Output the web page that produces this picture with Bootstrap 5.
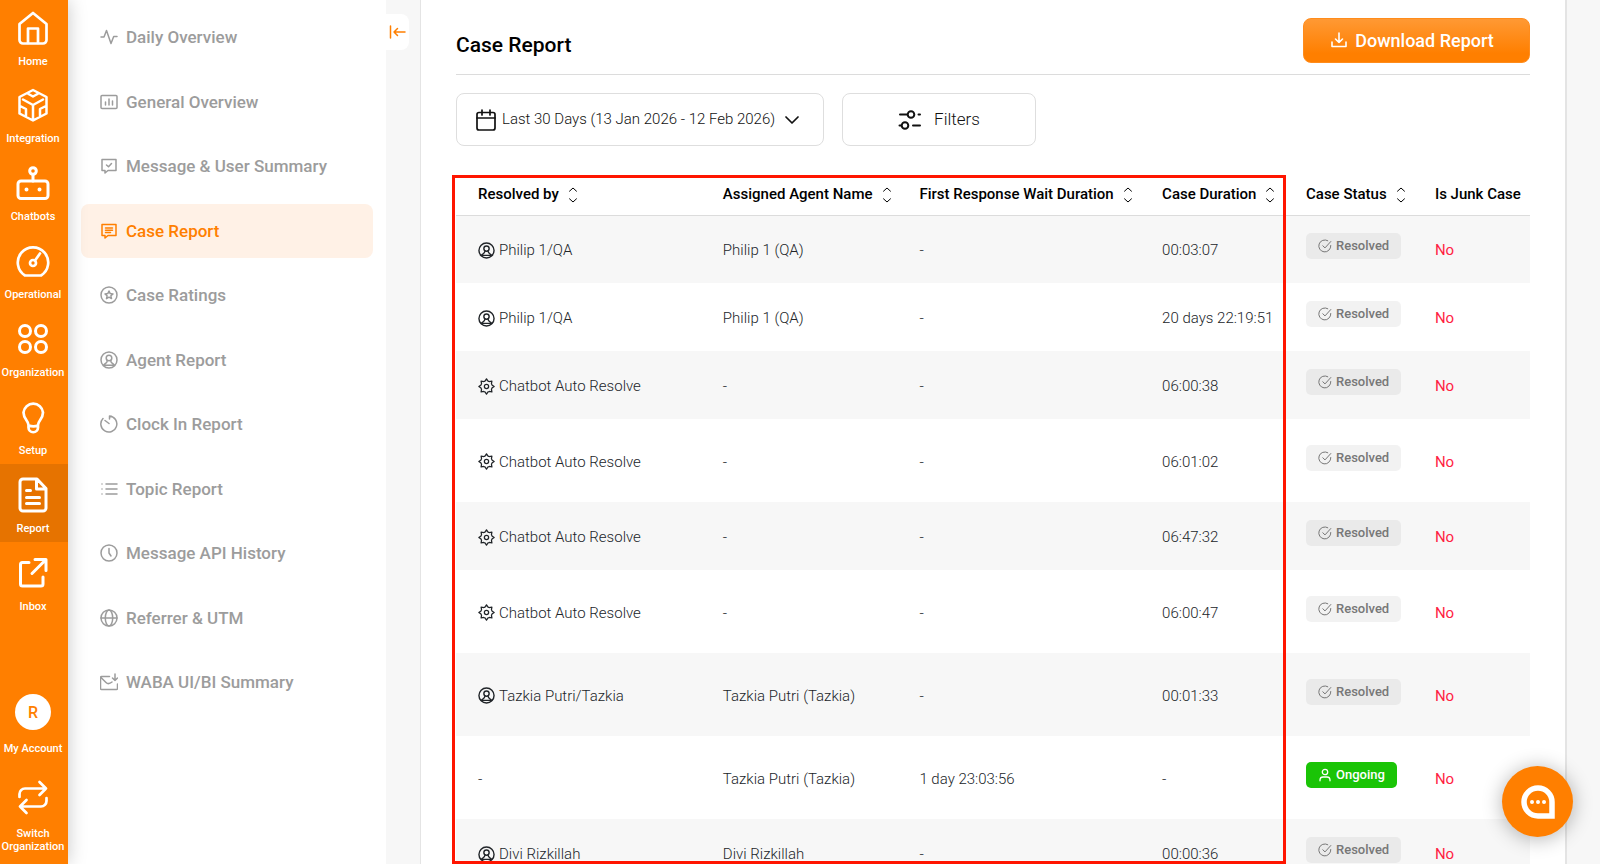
<!DOCTYPE html>
<html lang="en">
<head>
<meta charset="utf-8">
<meta name="viewport" content="width=device-width, initial-scale=1">
<title>Case Report</title>
<link href="https://cdn.jsdelivr.net/npm/bootstrap@5.3.0/dist/css/bootstrap.min.css" rel="stylesheet">
<style>
:root{--brand:#ff7f00;--brand-dark:#e67300;--soft:#f7f7f7;--line:#dcdcdc;--muted:#9c9c9c}
body{font-family:Roboto,"Liberation Sans",sans-serif;font-size:16px;color:#111;background:var(--soft);overflow:hidden}
svg{fill:none;stroke:currentColor;stroke-linecap:round;stroke-linejoin:round;flex:none}
.rail{width:68px;background:var(--brand);box-shadow:0 0 18px rgba(0,0,0,.22);z-index:3}
.rail a{color:#fff;font-size:11px;line-height:13px;font-weight:500;height:78px;padding:13px 0 0 0;margin-right:2px}
.rail a:first-child{height:74px;padding-top:10px}
.rail a.active{background:var(--brand-dark);margin-right:0;padding-right:2px}
.rail svg{width:36px;height:36px;stroke-width:2;margin-bottom:9px}
.rail .account:first-child{height:84px;padding-top:0}
.avatar{width:36px;height:36px;background:#fff;color:var(--brand);font-size:16px;margin-bottom:12px}
.rail .switch{height:86px;padding-top:2px}
.rail .switch svg{margin-bottom:11px}
.side{width:318px;background:#fff;padding:10px 13px 155px 13px;z-index:2}
.side a{color:var(--muted);font-size:17px;line-height:24px;font-weight:500;padding:15px 19px;border-radius:8px}
.side a.active{background:#fff1e6;color:var(--brand)}
.side svg{width:18px;height:18px;stroke-width:1.5}
.collapser{left:100%;top:14px;width:23px;height:36px;background:#fff;border-radius:0 8px 8px 0;color:var(--brand)}
.panel{margin:0 33px 0 34px;border:1px solid #e4e4e4;border-width:0 2px 0 1px;background:#fff;padding:0 35px}
.head{height:75px;border-bottom:1px solid var(--line)}
.head h1{font-size:21px;line-height:26px;font-weight:500;color:#000}
.btn-download{width:227px;height:45px;margin-top:6px;padding:0 20px 0 12px;border-radius:8px;color:#fff;font-size:18px;font-weight:500;border:1px solid #ff8c1c;background:linear-gradient(#ff9934,#ff7f00 80%)}
.btn-download:hover{color:#fff;background:var(--brand)}
.tools{gap:18px;padding:18px 0 29px}
.btn-tool{height:53px;border:1px solid #dedede;border-radius:8px;background:#fff;font-weight:300;color:#111}
.btn-date{width:368px;padding:0 19px;font-size:15px;gap:6px}
.btn-filter{width:194px;font-size:17px}
.report-area{min-height:0}
.report{table-layout:fixed;--bs-table-bg:transparent}
.report th,.report td{border:0;padding:0 0 0 22px;white-space:nowrap;vertical-align:middle}
.report thead th{height:40px;padding-bottom:1px;border-bottom:1px solid var(--line);font-size:15px;line-height:20px;font-weight:500;color:#000}
.report thead svg{width:12px;height:16px;stroke-width:1;margin-left:8px}
.report td{height:68px;padding-top:2px;font-weight:300;font-size:15px;line-height:20px}
.report tr.tall td{height:83px}
.report tbody tr:nth-child(odd){background:var(--soft)}
.report .junk{color:#ff1f44;font-weight:400}
.c-by{width:22.8%}.c-agent{width:18.3%}.c-wait{width:22.6%}.c-dur{width:13.4%}.c-status{width:12%}
.status{height:26px;padding:0 12px;margin-bottom:8px;border-radius:5px;font-size:13px;line-height:26px;font-weight:500;color:#777;background:rgba(0,0,0,.05)}
.status.live{background:#1ac406;color:#fff}
.focus-frame{top:0;left:-4px;width:77.7%;bottom:0;border:3px solid #ff1500;pointer-events:none}
.chat{right:27px;bottom:27px;width:71px;height:71px;background:var(--brand);color:#fff;box-shadow:0 2px 20px rgba(0,0,0,.3);z-index:5}
</style>
</head>
<body>
<svg width="0" height="0" class="position-absolute" aria-hidden="true">
<symbol id="i-user" viewBox="0 0 18 18"><circle cx="9" cy="9" r="8"/><circle cx="9" cy="7" r="2.800"/><path d="M3.500 14.200c1.200-1.800 3.600-1.800 3.900-4.700M14.500 14.200c-1.200-1.800-3.600-1.800-3.900-4.700M3.500 14.200h11"/></symbol>
<symbol id="i-gear" viewBox="0 0 24 24"><circle cx="12" cy="12" r="3"/><path d="M12 1.200 14.200 4.300a8 8 0 0 1 1.700.7L19.600 4.400 19 8.100a8 8 0 0 1 .7 1.700L22.800 12 19.700 14.200a8 8 0 0 1-.7 1.700L19.600 19.600 15.900 19a8 8 0 0 1-1.700.7L12 22.800 9.800 19.700A8 8 0 0 1 8.100 19L4.400 19.600 5 15.900a8 8 0 0 1-.7-1.700L1.200 12 4.300 9.800A8 8 0 0 1 5 8.100L4.400 4.400 8.100 5a8 8 0 0 1 1.700-.7z"/></symbol>
<symbol id="i-sort" viewBox="0 0 10 16"><path d="M1.500 4.200 5 1l3.500 3.200M1.500 11.800 5 15l3.500-3.200"/></symbol>
<symbol id="i-check" viewBox="0 0 14 14"><path d="M12.800 6.500A6 6 0 1 1 9.800 1.700M4.800 6.800 7 8.900l5.800-6.400"/></symbol>
</svg>

<div class="d-flex vh-100">
<nav class="rail d-flex flex-column justify-content-between flex-shrink-0 text-center" aria-label="Main">
<div>
<a href="#" class="d-flex flex-column align-items-center text-decoration-none"><svg viewBox="0 0 36 36" style="stroke-width:2.7"><path d="M4.500 14 18 3l13.500 11v16a3.500 3.500 0 0 1-3.500 3.500H8A3.500 3.500 0 0 1 4.500 30z"/><path d="M13 33V18.500h10V33"/></svg>Home</a>
<a href="#" class="d-flex flex-column align-items-center text-decoration-none"><svg viewBox="0 0 36 36" style="stroke-width:2.5"><path d="M18 3 31.500 10v16.500L18 33.500 4.500 26.500V10zM18 20v13M8 12.500l10 5.500 10-5.500M18 18v3M13.500 7 18 9.500 22.500 7M5 19l6 3v6.500M31 19l-6 3v6.500"/></svg>Integration</a>
<a href="#" class="d-flex flex-column align-items-center text-decoration-none"><svg viewBox="0 0 36 36" style="stroke-width:3"><rect x="3" y="16" width="30" height="17.500" rx="3"/><circle cx="18" cy="6" r="3.300"/><path d="M18 9.500V16"/><path d="M11.500 24.500h.01M24.500 24.500h.01" stroke-width="4"/></svg>Chatbots</a>
<a href="#" class="d-flex flex-column align-items-center text-decoration-none"><svg viewBox="0 0 36 36" style="stroke-width:2.7"><path d="M10 32.500a15.200 15.200 0 1 1 16 0z"/><circle cx="18" cy="20" r="3"/><path d="M20 17.500l5-7"/></svg>Operational</a>
<a href="#" class="d-flex flex-column align-items-center text-decoration-none"><svg viewBox="0 0 36 36" style="stroke-width:3"><circle cx="10" cy="10" r="5.500"/><circle cx="26" cy="10" r="5.500"/><circle cx="10" cy="26" r="5.500"/><circle cx="26" cy="26" r="5.500"/></svg>Organization</a>
<a href="#" class="d-flex flex-column align-items-center text-decoration-none"><svg viewBox="0 0 36 36" style="stroke-width:2.7"><path d="M13.500 26c0-4-5-6-5-12.500a9.800 9.800 0 0 1 19.500 0C28 20 23 22 23 26v2.500a4.700 4.700 0 0 1-9.500 0zM14 26.500c2.800 1 6 1 9 0"/></svg>Setup</a>
<a href="#" class="active d-flex flex-column align-items-center text-decoration-none" aria-current="page"><svg viewBox="0 0 36 36" style="stroke-width:3"><path d="M8 2h14l9 9.500V31a3 3 0 0 1-3 3H8a3 3 0 0 1-3-3V5a3 3 0 0 1 3-3zM21.500 3v9H31M11.500 13.500h4M11.500 20.500h13M11.500 26.500h13"/></svg>Report</a>
<a href="#" class="d-flex flex-column align-items-center text-decoration-none"><svg viewBox="0 0 36 36" style="stroke-width:3"><path d="M14 7.500H7.500a2 2 0 0 0-2 2V29a2 2 0 0 0 2 2H26a2 2 0 0 0 2-2v-7M20 4.500h11v11M30.500 5 17 18.500"/></svg>Inbox</a>
</div>
<div>
<a href="#" class="account d-flex flex-column align-items-center text-decoration-none"><span class="avatar rounded-circle d-flex align-items-center justify-content-center">R</span>My Account</a>
<a href="#" class="switch d-flex flex-column align-items-center text-decoration-none"><svg viewBox="0 0 36 36" style="stroke-width:2.7"><path d="M4.500 17v-3A5.500 5.500 0 0 1 10 8.500h21M24.500 2 31 8.500 24.500 15M31.500 18v3a5.500 5.500 0 0 1-5.500 5.500H5M11.500 20 5 26.500l6.500 6.500"/></svg>Switch<br>Organization</a>
</div>
</nav>

<nav class="side position-relative d-flex flex-column justify-content-between flex-shrink-0" aria-label="Reports">
<a href="#" class="d-flex align-items-center gap-2 text-decoration-none"><svg viewBox="0 0 18 18"><path d="M1 9h3l2.500-6.500 4.500 13L13.700 8.500H17"/></svg>Daily Overview</a>
<a href="#" class="d-flex align-items-center gap-2 text-decoration-none"><svg viewBox="0 0 18 18"><rect x="1" y="2.500" width="16" height="13" rx="1"/><path d="M5.500 9v3M9 6v6M12.500 8v4"/></svg>General Overview</a>
<a href="#" class="d-flex align-items-center gap-2 text-decoration-none"><svg viewBox="0 0 18 18"><path d="M2 2.500h14v11H8L5 16v-2.500H2zM6.500 8l2 1.800 3-3.300"/></svg>Message &amp; User Summary</a>
<a href="#" class="active d-flex align-items-center gap-2 text-decoration-none" aria-current="page"><svg viewBox="0 0 18 18"><path d="M2 2.500h14v11H8L5 16v-2.500H2zM5.500 6h7M5.500 8.200h7M5.500 10.500h5"/></svg>Case Report</a>
<a href="#" class="d-flex align-items-center gap-2 text-decoration-none"><svg viewBox="0 0 18 18"><circle cx="9" cy="9" r="8"/><path d="m9 5 1.200 2.600 2.800.3-2.100 1.900.6 2.800L9 11.200l-2.500 1.400.6-2.800L5 7.900l2.800-.3z"/></svg>Case Ratings</a>
<a href="#" class="d-flex align-items-center gap-2 text-decoration-none"><svg><use href="#i-user"/></svg>Agent Report</a>
<a href="#" class="d-flex align-items-center gap-2 text-decoration-none"><svg viewBox="0 0 18 18"><path d="M9.500 4V1A8 8 0 1 1 3 3.500M5 5.500l4 3"/></svg>Clock In Report</a>
<a href="#" class="d-flex align-items-center gap-2 text-decoration-none"><svg viewBox="0 0 18 18"><path d="M6 4h11M6 9h11M6 14h11M2 4h.01M2 9h.01M2 14h.01"/></svg>Topic Report</a>
<a href="#" class="d-flex align-items-center gap-2 text-decoration-none"><svg viewBox="0 0 18 18"><circle cx="9" cy="9" r="8"/><path d="M9 4.500V9l2 3"/></svg>Message API History</a>
<a href="#" class="d-flex align-items-center gap-2 text-decoration-none"><svg viewBox="0 0 18 18"><circle cx="9" cy="9" r="8"/><ellipse cx="9" cy="9" rx="3.700" ry="8"/><path d="M1 9h16"/></svg>Referrer &amp; UTM</a>
<a href="#" class="d-flex align-items-center gap-2 text-decoration-none"><svg viewBox="0 0 18 18"><path d="M9.500 3.500H1.500a1 1 0 0 0-1 1v11a1 1 0 0 0 1 1h15a1 1 0 0 0 1-1V11M1 4.500l5 5c1.500 1.500 3 2 6-.5M15 1v6.500M12.500 5 15 7.500 17.500 5"/></svg>WABA UI/BI Summary</a>
<button type="button" class="collapser position-absolute border-0 p-0 d-flex align-items-center justify-content-center" aria-label="Collapse menu"><svg viewBox="0 0 18 18"><path d="M1.500 3v12M16 9H5M8.500 5.500 5 9l3.500 3.500"/></svg></button>
</nav>

<main class="panel flex-grow-1 d-flex flex-column overflow-hidden">
<header class="head d-flex justify-content-between align-items-center flex-shrink-0">
<h1 class="mb-0 pt-3">Case Report</h1>
<button type="button" class="btn btn-download d-flex align-items-center justify-content-center gap-2"><svg width="16" height="16" viewBox="0 0 16 16" stroke-width="1.600"><path d="M8 1v9.500M4.500 7 8 10.500 11.500 7M1 10v4.500h14V10"/></svg>Download Report</button>
</header>
<div class="tools d-flex flex-shrink-0">
<button type="button" class="btn btn-tool btn-date d-flex align-items-center text-nowrap"><svg width="20" height="22" viewBox="0 0 20 22" stroke-width="1.700"><rect x="1" y="3.500" width="18" height="17.500" rx="2"/><path d="M1 9h18M6 1v5M14 1v5"/></svg>Last 30 Days (13 Jan 2026 - 12 Feb 2026)<svg class="ms-1" width="14" height="8" viewBox="0 0 14 8" stroke-width="1.700"><path d="m1 1 6 6 6-6"/></svg></button>
<button type="button" class="btn btn-tool btn-filter d-flex align-items-center justify-content-center gap-2"><svg class="me-1" width="24" height="22" viewBox="0 0 24 22" stroke-width="2"><path d="M2 5.500h7M20.500 5.500H22M1.500 16.500H3M15 16.500h7"/><circle cx="13" cy="5.500" r="3.300"/><circle cx="7" cy="16.500" r="3.300"/></svg>Filters</button>
</div>
<div class="report-area position-relative flex-grow-1">
<div class="h-100 overflow-hidden">
<table class="table report mb-0">
<colgroup><col class="c-by"><col class="c-agent"><col class="c-wait"><col class="c-dur"><col class="c-status"><col></colgroup>
<thead><tr>
<th scope="col">Resolved by<svg><use href="#i-sort"/></svg></th>
<th scope="col">Assigned Agent Name<svg><use href="#i-sort"/></svg></th>
<th scope="col">First Response Wait Duration<svg><use href="#i-sort"/></svg></th>
<th scope="col">Case Duration<svg><use href="#i-sort"/></svg></th>
<th scope="col">Case Status<svg><use href="#i-sort"/></svg></th>
<th scope="col">Is Junk Case</th>
</tr></thead>
<tbody>
<tr><td><div class="d-flex align-items-center gap-1"><svg width="17" height="17" stroke-width="1.500"><use href="#i-user"/></svg>Philip 1/QA</div></td><td>Philip 1 (QA)</td><td>-</td><td>00:03:07</td><td><span class="status d-inline-flex align-items-center gap-1"><svg width="14" height="14"><use href="#i-check"/></svg>Resolved</span></td><td class="junk">No</td></tr>
<tr><td><div class="d-flex align-items-center gap-1"><svg width="17" height="17" stroke-width="1.500"><use href="#i-user"/></svg>Philip 1/QA</div></td><td>Philip 1 (QA)</td><td>-</td><td>20 days 22:19:51</td><td><span class="status d-inline-flex align-items-center gap-1"><svg width="14" height="14"><use href="#i-check"/></svg>Resolved</span></td><td class="junk">No</td></tr>
<tr><td><div class="d-flex align-items-center gap-1"><svg width="17" height="17" stroke-width="1.800"><use href="#i-gear"/></svg>Chatbot Auto Resolve</div></td><td>-</td><td>-</td><td>06:00:38</td><td><span class="status d-inline-flex align-items-center gap-1"><svg width="14" height="14"><use href="#i-check"/></svg>Resolved</span></td><td class="junk">No</td></tr>
<tr class="tall"><td><div class="d-flex align-items-center gap-1"><svg width="17" height="17" stroke-width="1.800"><use href="#i-gear"/></svg>Chatbot Auto Resolve</div></td><td>-</td><td>-</td><td>06:01:02</td><td><span class="status d-inline-flex align-items-center gap-1"><svg width="14" height="14"><use href="#i-check"/></svg>Resolved</span></td><td class="junk">No</td></tr>
<tr><td><div class="d-flex align-items-center gap-1"><svg width="17" height="17" stroke-width="1.800"><use href="#i-gear"/></svg>Chatbot Auto Resolve</div></td><td>-</td><td>-</td><td>06:47:32</td><td><span class="status d-inline-flex align-items-center gap-1"><svg width="14" height="14"><use href="#i-check"/></svg>Resolved</span></td><td class="junk">No</td></tr>
<tr class="tall"><td><div class="d-flex align-items-center gap-1"><svg width="17" height="17" stroke-width="1.800"><use href="#i-gear"/></svg>Chatbot Auto Resolve</div></td><td>-</td><td>-</td><td>06:00:47</td><td><span class="status d-inline-flex align-items-center gap-1"><svg width="14" height="14"><use href="#i-check"/></svg>Resolved</span></td><td class="junk">No</td></tr>
<tr class="tall"><td><div class="d-flex align-items-center gap-1"><svg width="17" height="17" stroke-width="1.500"><use href="#i-user"/></svg>Tazkia Putri/Tazkia</div></td><td>Tazkia Putri (Tazkia)</td><td>-</td><td>00:01:33</td><td><span class="status d-inline-flex align-items-center gap-1"><svg width="14" height="14"><use href="#i-check"/></svg>Resolved</span></td><td class="junk">No</td></tr>
<tr class="tall"><td>-</td><td>Tazkia Putri (Tazkia)</td><td>1 day 23:03:56</td><td>-</td><td><span class="status live d-inline-flex align-items-center gap-1"><svg width="14" height="14" viewBox="0 0 14 14" stroke-width="1.300"><circle cx="7" cy="4" r="2.700"/><path d="M2 12.800v-1A3 3 0 0 1 5 9h4a3 3 0 0 1 3 2.800v1"/></svg>Ongoing</span></td><td class="junk">No</td></tr>
<tr><td><div class="d-flex align-items-center gap-1"><svg width="17" height="17" stroke-width="1.500"><use href="#i-user"/></svg>Divi Rizkillah</div></td><td>Divi Rizkillah</td><td>-</td><td>00:00:36</td><td><span class="status d-inline-flex align-items-center gap-1"><svg width="14" height="14"><use href="#i-check"/></svg>Resolved</span></td><td class="junk">No</td></tr>
</tbody>
</table>
</div>
<div class="focus-frame position-absolute"></div>
</div>
</main>
</div>

<button type="button" class="chat position-fixed border-0 rounded-circle p-0 d-flex align-items-center justify-content-center" aria-label="Open chat"><svg width="36" height="36" viewBox="0 0 36 36"><path d="M32 18v14H18a14 14 0 1 1 14-14z" stroke-width="5.500" stroke-linejoin="miter"/><path d="M12 18h.01M18 18h.01M24 18h.01" stroke-width="4"/></svg></button>
<script src="https://cdn.jsdelivr.net/npm/bootstrap@5.3.0/dist/js/bootstrap.bundle.min.js"></script>
</body>
</html>
